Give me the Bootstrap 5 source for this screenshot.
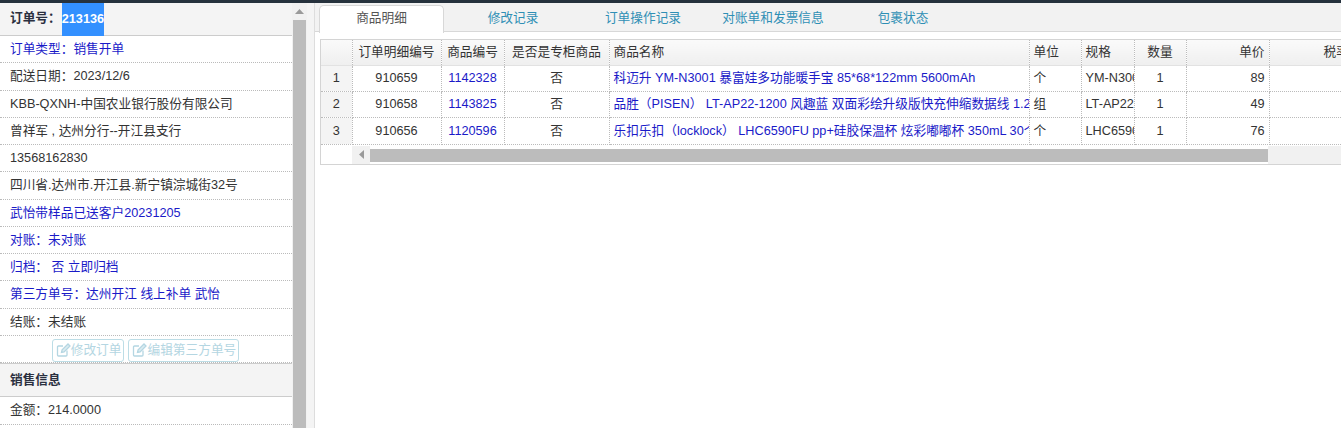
<!DOCTYPE html>
<html lang="zh-CN">
<head>
<meta charset="utf-8">
<title>订单详情</title>
<link href="https://cdn.jsdelivr.net/npm/bootstrap@5.3.0/dist/css/bootstrap.min.css" rel="stylesheet">
<style>
html,body{height:428px;overflow:hidden;background:#fff}
body{font-family:"Liberation Sans","Noto Sans CJK SC",sans-serif;font-size:12.7px;color:#333;line-height:1.2}
.topstrip{height:3px;background:#26323d}
.shell{height:425px}
.sidepane{width:292px;flex:none;overflow:hidden}
.sidehead{background:#f4f4f4;border-bottom:1px solid #ccc;font-weight:700;font-size:12.7px;color:#2b3040}
.headone{height:33px;padding-left:10px}
.headtwo{height:34px;padding-left:10px;border-top:1px solid #ccc}
.picked{background:#3390ff;color:#fff;align-self:stretch;display:flex;align-items:center;margin-left:1px;width:42px;margin-bottom:-1px;overflow:hidden}
.siderow{height:27.25px;padding:1px 0 0 10px;border-bottom:1px dotted #bbb;color:#333;white-space:nowrap}
.bluetext{color:#1a1ac8}
.btnrow{height:27.5px;padding:2px 1px 0 0}
.ghostbtn{height:23px;padding:0 2px 0 3px;font-size:12.7px;line-height:1;color:#b4d6e2;border:1px solid #bcdde6;border-radius:3px;background:#fff;--bs-btn-disabled-opacity:1;--bs-btn-disabled-color:#b4d6e2;--bs-btn-disabled-border-color:#bcdde6;--bs-btn-disabled-bg:#fff}
.vtrack{width:15px;flex:none;background:#f1f1f1}
.vcap{height:17px;flex:none}
.vthumb{flex:1;background:#bcbcbc;margin:0 1px 0 1px}
.vgutter{width:7px;flex:none;background:#f4f4f4}
.mainpane{flex:1;min-width:0;overflow:hidden;border-left:1px solid #ddd;background:#fff}
.tabstrip{background:#f2f2f2;height:29px;padding-left:4px;border-bottom:1px solid #d8d8d8;--bs-nav-tabs-border-width:0}
.tabstrip .nav-link{height:28px;margin:0;padding:0;border:0;font-size:12.7px;line-height:30px;text-align:center;color:#2f8fb5;border-radius:0;background:none}
.tabstrip .nav-link.active{height:28px;margin-top:2px;margin-bottom:-1px;line-height:24px;background:#fff;color:#555;border:1px solid #d8d8d8;border-bottom:0;border-radius:5px 5px 0 0}
.tw1{width:125px;margin-right:4px}.tw2{width:130px}.tw3{width:130px}.tw4{width:130px}.tw5{width:130px}
.gridbox{margin:7px 0 0 5px;border:1px solid #d4d4d4;border-right:0;height:126px;overflow:hidden;width:1040px}
.gridbox .table{width:1099px;table-layout:fixed;margin:0;--bs-table-color:#333;font-size:12.7px}
.gridbox col:nth-child(1){width:31px}
.gridbox col:nth-child(2){width:89px}
.gridbox col:nth-child(3){width:63px}
.gridbox col:nth-child(4){width:105px}
.gridbox col:nth-child(5){width:420px}
.gridbox col:nth-child(6){width:52px}
.gridbox col:nth-child(7){width:53px}
.gridbox col:nth-child(8){width:52px}
.gridbox col:nth-child(9){width:83px}
.gridbox col:nth-child(10){width:151px}
.gridbox th,.gridbox td{padding:0 4px;white-space:nowrap;overflow:hidden;border:0;border-right:1px dotted #bbb;border-bottom:1px dotted #bbb;vertical-align:middle;font-weight:400}
.gridbox thead th{height:25px;background:linear-gradient(#fafafa,#efefef);border-bottom:1px solid #e2e2e2}
.gridbox tbody td{height:26px;padding-top:1px}
.gridbox tbody tr:last-child td{height:27px;padding-top:2px}
.gridbox tbody td.rownum{background:#f4f4f4;text-align:center}
.gridbox thead th.ratecol{padding-left:54px;text-align:left}
.linkcell{color:#1a1ac8}
.hbar{height:18px;margin-top:1px}
.hcorner{width:31px;flex:none;background:#fff}
.harrow{width:18px;flex:none;background:#f1f1f1}
.hthumb{width:898px;flex:none;background:#bcbcbc;margin:3px 0 2px}
.hrest{flex:1;background:#f1f1f1}
</style>
</head>
<body>
<div class="topstrip"></div>
<div class="shell d-flex">
  <aside class="sidepane">
    <div class="sidehead headone d-flex align-items-center">订单号：<span class="picked">213136</span></div>
    <div class="siderow d-flex align-items-center bluetext">订单类型：销售开单</div>
    <div class="siderow d-flex align-items-center">配送日期：2023/12/6</div>
    <div class="siderow d-flex align-items-center">KBB-QXNH-中国农业银行股份有限公司</div>
    <div class="siderow d-flex align-items-center">曾祥军 , 达州分行--开江县支行</div>
    <div class="siderow d-flex align-items-center">13568162830</div>
    <div class="siderow d-flex align-items-center">四川省.达州市.开江县.新宁镇淙城街32号</div>
    <div class="siderow d-flex align-items-center bluetext">武怡带样品已送客户20231205</div>
    <div class="siderow d-flex align-items-center bluetext">对账：未对账</div>
    <div class="siderow d-flex align-items-center bluetext">归档：&nbsp;否 立即归档</div>
    <div class="siderow d-flex align-items-center bluetext">第三方单号：达州开江 线上补单 武怡</div>
    <div class="siderow d-flex align-items-center">结账：未结账</div>
    <div class="siderow btnrow d-flex align-items-center justify-content-center gap-1">
      <button class="btn ghostbtn d-inline-flex align-items-center" disabled><svg width="15" height="14" viewBox="0 0 15 14" fill="none" stroke="#b4d6e2" stroke-width="1.3"><path d="M11 7.500V12a1 1 0 0 1-1 1H2.500a1 1 0 0 1-1-1V4a1 1 0 0 1 1-1H7"/><path d="M5.500 9.500l.6-2.600L12 1l2 2-5.900 5.900z" fill="#dcecf1"/></svg>修改订单</button>
      <button class="btn ghostbtn d-inline-flex align-items-center" disabled><svg width="15" height="14" viewBox="0 0 15 14" fill="none" stroke="#b4d6e2" stroke-width="1.3"><path d="M11 7.500V12a1 1 0 0 1-1 1H2.500a1 1 0 0 1-1-1V4a1 1 0 0 1 1-1H7"/><path d="M5.500 9.500l.6-2.600L12 1l2 2-5.900 5.900z" fill="#dcecf1"/></svg>编辑第三方单号</button>
    </div>
    <div class="sidehead headtwo d-flex align-items-center">销售信息</div>
    <div class="siderow d-flex align-items-center">金额：214.0000</div>
  </aside>
  <div class="vtrack d-flex flex-column">
    <div class="vcap d-flex align-items-center justify-content-center"><svg width="9" height="5" viewBox="0 0 9 5"><path d="M4.500 0L9 5H0z" fill="#9a9a9a"/></svg></div>
    <div class="vthumb"></div>
  </div>
  <div class="vgutter"></div>
  <main class="mainpane">
    <ul class="nav nav-tabs tabstrip flex-nowrap">
      <li class="nav-item tw1"><a class="nav-link active" href="#">商品明细</a></li>
      <li class="nav-item tw2"><a class="nav-link" href="#">修改记录</a></li>
      <li class="nav-item tw3"><a class="nav-link" href="#">订单操作记录</a></li>
      <li class="nav-item tw4"><a class="nav-link" href="#">对账单和发票信息</a></li>
      <li class="nav-item tw5"><a class="nav-link" href="#">包裹状态</a></li>
    </ul>
    <div class="gridbox">
      <table class="table">
        <colgroup><col><col><col><col><col><col><col><col><col><col></colgroup>
        <thead><tr><th></th><th class="text-center">订单明细编号</th><th class="text-center">商品编号</th><th class="text-center">是否是专柜商品</th><th>商品名称</th><th>单位</th><th>规格</th><th class="text-center">数量</th><th class="text-end">单价</th><th class="ratecol">税率</th></tr></thead>
        <tbody>
          <tr><td class="rownum">1</td><td class="text-center">910659</td><td class="text-center linkcell">1142328</td><td class="text-center">否</td><td class="linkcell">科迈升 YM-N3001 暴富娃多功能暖手宝 85*68*122mm 5600mAh</td><td>个</td><td>YM-N3001</td><td class="text-center">1</td><td class="text-end">89</td><td></td></tr>
          <tr><td class="rownum">2</td><td class="text-center">910658</td><td class="text-center linkcell">1143825</td><td class="text-center">否</td><td class="linkcell">品胜（PISEN） LT-AP22-1200 风趣蓝 双面彩绘升级版快充伸缩数据线 1.2米</td><td>组</td><td>LT-AP22-1200</td><td class="text-center">1</td><td class="text-end">49</td><td></td></tr>
          <tr><td class="rownum">3</td><td class="text-center">910656</td><td class="text-center linkcell">1120596</td><td class="text-center">否</td><td class="linkcell">乐扣乐扣（locklock） LHC6590FU pp+硅胶保温杯 炫彩嘟嘟杯 350mL 30个</td><td>个</td><td>LHC6590FU</td><td class="text-center">1</td><td class="text-end">76</td><td></td></tr>
        </tbody>
      </table>
      <div class="hbar d-flex">
        <div class="hcorner"></div>
        <div class="harrow d-flex align-items-center justify-content-center"><svg width="5" height="9" viewBox="0 0 5 9"><path d="M0 4.500L5 0V9z" fill="#9a9a9a"/></svg></div>
        <div class="hthumb"></div>
        <div class="hrest"></div>
      </div>
    </div>
  </main>
</div>
</body>
</html>
